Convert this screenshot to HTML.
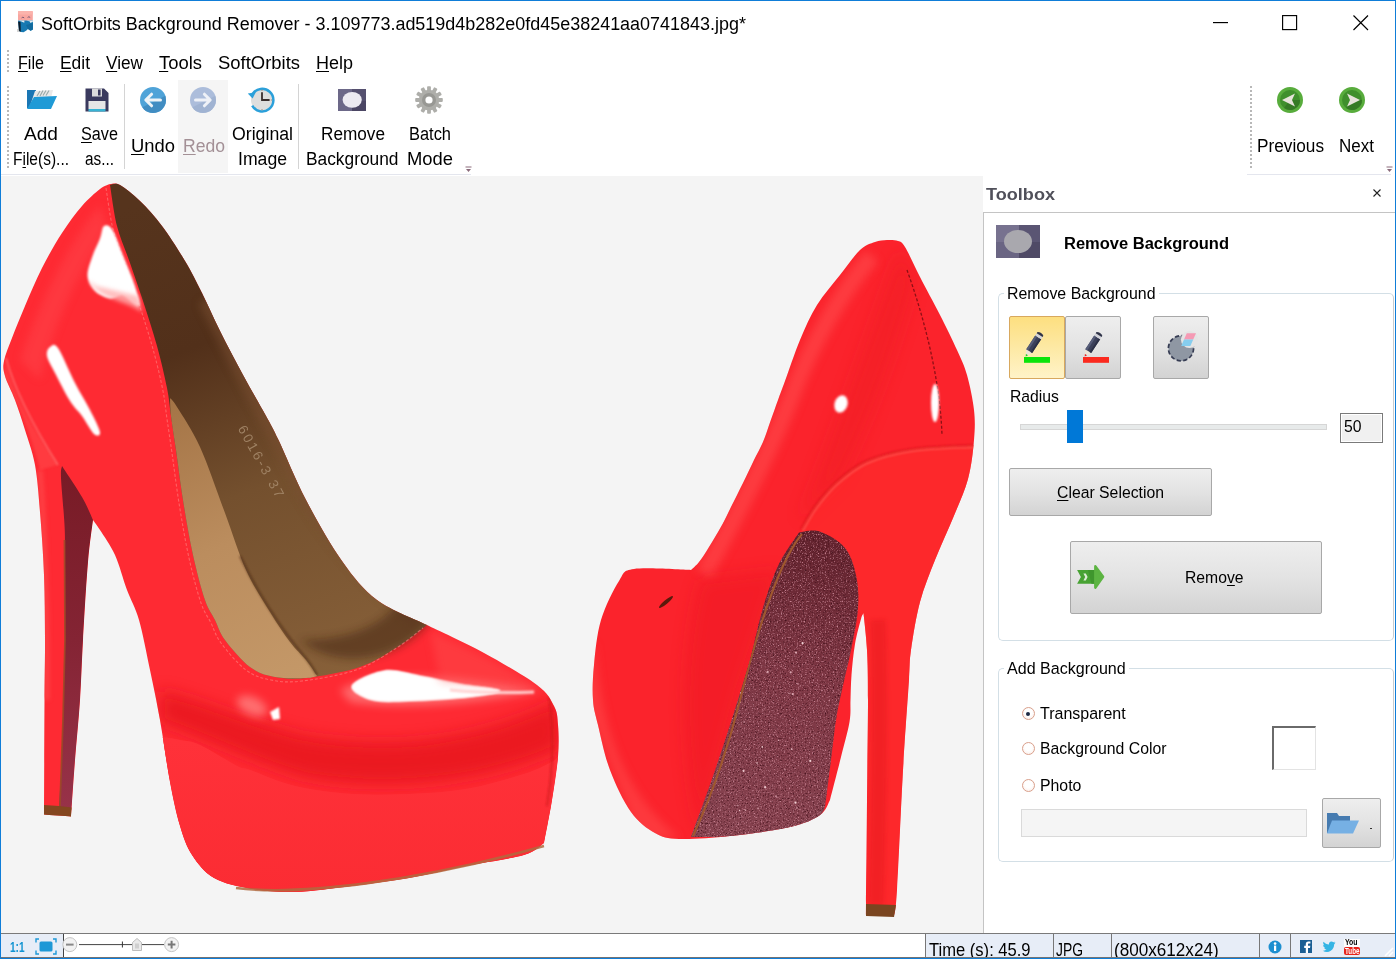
<!DOCTYPE html>
<html lang="en">
<head>
<meta charset="utf-8">
<title>SoftOrbits Background Remover</title>
<style>
*{box-sizing:border-box;margin:0;padding:0}
html,body{width:1396px;height:959px;overflow:hidden;background:#fff}
body{position:relative;font-family:"Liberation Sans",sans-serif;color:#000}
.abs{position:absolute}
.t{position:absolute;white-space:nowrap;line-height:1;transform-origin:0 0;font-family:"Liberation Sans",sans-serif}
.u{text-decoration:underline;text-underline-offset:2px;text-decoration-thickness:1px}
#win{position:absolute;left:0;top:0;width:1396px;height:959px;border:1px solid #0f7dd8;pointer-events:none;z-index:50}
#canvas{position:absolute;left:1px;top:176px;width:982px;height:757px;background:#f4f4f4;overflow:hidden}
#panel{position:absolute;left:983px;top:176px;width:412px;height:757px;background:#fff}
.grip{position:absolute;width:2px;background-image:linear-gradient(#b8b8b8 50%,transparent 50%);background-size:2px 4px}
.vsep{position:absolute;width:1px;background:#d4d4d4}
.gbtn{position:absolute;border:1px solid #a8a8a8;background:linear-gradient(#eee,#e3e3e3 50%,#d3d3d3);border-radius:2px;}
.grp{position:absolute;border:1px solid #d3dfe6;border-right-color:#c9cdd0;border-radius:5px}
.radio{position:absolute;width:13px;height:13px;border-radius:50%;border:1px solid #d9a08c;background:radial-gradient(circle at 50% 40%,#fff 40%,#fbe9e2)}
</style>
</head>
<body>
<!-- ===== title bar ===== -->
<svg class="abs" style="left:17px;top:10px" width="18" height="24" viewBox="0 0 18 24">
  <rect x="1" y="1" width="14.8" height="9.8" rx="1" fill="#f8a6a0"/><rect x="1" y="1" width="14.8" height="3.4" rx="1" fill="#fbb3ac"/>
  <path d="M1.1 10.4 H15.9 V19.6 L13.6 20.8 L11 19 L9.4 20.6 L6.6 22.3 L4 22 L2 21 Z" fill="#1679b2"/>
  <path d="M9 15 L15.9 13 V19.6 L13.6 20.8 L11 19 Z" fill="#126a9e"/>
  <path d="M1.1 11.6 L3.5 12 L3.8 21.8 L2 21 Z" fill="#0a1b2a"/>
  <path d="M1.4 10.4 L7.4 10.4 L7.3 12.8 L4.4 11.6 Z M9.6 10.4 H15.9 V11.8 L13.4 13 L12.8 11.4 Z" fill="#e4edf2"/>
  <path d="M4.6 7.9 Q5.9 6.4 7.2 7.9 M10.6 7.5 Q11.9 6 13.2 7.5" stroke="#6b5570" stroke-width=".9" fill="none"/>
  <ellipse cx="1.2" cy="20.5" rx="2.2" ry="1.6" fill="#555" opacity=".25"/>
</svg>
<span class="t" style="left:41px;top:15.7px;font-size:17.6px;transform:scaleX(1.0208)">SoftOrbits Background Remover - 3.109773.ad519d4b282e0fd45e38241aa0741843.jpg*</span>
<svg class="abs" style="left:1200px;top:8px" width="180" height="30" viewBox="0 0 180 30" fill="none" stroke="#000" stroke-width="1.15">
  <path d="M13 14.6 H28"/>
  <rect x="82.6" y="7.6" width="14" height="14"/>
  <path d="M153.5 7.5 L168 22 M168 7.5 L153.5 22"/>
</svg>
<!-- ===== menu bar ===== -->
<div class="grip" style="left:7px;top:50px;height:22px"></div>
<span class="t" style="left:18px;top:54.9px;font-size:17.6px;transform:scaleX(0.9168)"><span class="u">F</span>ile</span>
<span class="t" style="left:60px;top:54.9px;font-size:17.6px;transform:scaleX(0.9887)"><span class="u">E</span>dit</span>
<span class="t" style="left:106px;top:54.9px;font-size:17.6px;transform:scaleX(0.9781)"><span class="u">V</span>iew</span>
<span class="t" style="left:159px;top:54.9px;font-size:17.6px;transform:scaleX(1.0468)"><span class="u">T</span>ools</span>
<span class="t" style="left:218px;top:54.9px;font-size:17.6px;transform:scaleX(1.0483)">SoftOrbits</span>
<span class="t" style="left:316px;top:54.9px;font-size:17.6px;transform:scaleX(1.0220)"><span class="u">H</span>elp</span>
<!-- ===== toolbar ===== -->
<div class="grip" style="left:7px;top:86px;height:82px"></div>
<div class="abs" style="left:178px;top:80px;width:50px;height:93px;background:#f5f5f5"></div>
<div class="vsep" style="left:124px;top:84px;height:85px"></div>
<div class="vsep" style="left:298px;top:84px;height:85px"></div>
<div class="abs" style="left:1px;top:174px;width:470px;height:1px;background:#e4e6ee"></div>
<span class="t" style="left:24px;top:125.6px;font-size:17.6px;transform:scaleX(1.0858)">Add</span>
<span class="t" style="left:13px;top:150.6px;font-size:17.6px;transform:scaleX(0.8812)">F<span class="u">i</span>le(s)...</span>
<span class="t" style="left:81px;top:125.6px;font-size:17.6px;transform:scaleX(0.9221)"><span class="u">S</span>ave</span>
<span class="t" style="left:85px;top:150.6px;font-size:17.6px;transform:scaleX(0.8722)">as...</span>
<span class="t" style="left:131px;top:137.6px;font-size:17.6px;transform:scaleX(1.0457)"><span class="u">U</span>ndo</span>
<span class="t" style="left:183px;top:137.6px;font-size:17.6px;color:#a39096;transform:scaleX(0.9981)"><span class="u">R</span>edo</span>
<span class="t" style="left:231.5px;top:125.6px;font-size:17.6px;transform:scaleX(1.0062)">Original</span>
<span class="t" style="left:238px;top:150.6px;font-size:17.6px;transform:scaleX(1.0019)">Image</span>
<span class="t" style="left:321px;top:125.6px;font-size:17.6px;transform:scaleX(0.9769)">Remove</span>
<span class="t" style="left:306px;top:150.6px;font-size:17.6px;transform:scaleX(0.9850)">Background</span>
<span class="t" style="left:409px;top:125.6px;font-size:17.6px;transform:scaleX(0.9333)">Batch</span>
<span class="t" style="left:407px;top:150.6px;font-size:17.6px;transform:scaleX(1.0451)">Mode</span>
<!-- add files icon -->
<svg class="abs" style="left:24px;top:88px" width="36" height="24" viewBox="0 0 36 24">
  <path d="M3 2 H12 L9 20 H3 Z" fill="#1a76b4"/>
  <path d="M11 3 L29 2 L27 10 L6 18 Z" fill="#e9e9e9"/>
  <path d="M13 8 l3-5 M16 8 l3-5.5 M19 7.5 l3-5 M22 7.5 l3-5" stroke="#9aa" stroke-width="1.2"/>
  <path d="M10 9 L33 8 L27 21 H3 Z" fill="#1f9ad6"/>
</svg>
<!-- save icon -->
<svg class="abs" style="left:84px;top:87px" width="26" height="26" viewBox="0 0 26 26">
  <path d="M1.5 1.5 H20 L24.5 6 V24.5 H1.5 Z" fill="#3a3a5e"/>
  <rect x="8" y="1.5" width="10" height="8" fill="#dcdcdc"/><rect x="14" y="2.5" width="2.6" height="6" fill="#3a3a5e"/>
  <rect x="4.5" y="14" width="17" height="8" fill="#e6e6e6"/><rect x="4.5" y="22" width="17" height="2.5" fill="#38b3d4"/>
</svg>
<!-- undo -->
<svg class="abs" style="left:139px;top:86px" width="28" height="28" viewBox="0 0 28 28">
  <defs><clipPath id="cu"><circle cx="14" cy="14" r="13"/></clipPath></defs>
  <circle cx="14" cy="14" r="13" fill="#4fa3d8"/><path d="M-2 24 L30 8 V30 H-2 Z" fill="#3d87bd" opacity=".8" clip-path="url(#cu)"/>
  <path d="M7.2 14 H21.5 M12.6 8.2 L6.8 14 L12.6 19.8" fill="none" stroke="#eef3f7" stroke-width="3" stroke-linecap="round" stroke-linejoin="round"/>
</svg>
<!-- redo -->
<svg class="abs" style="left:189px;top:86px" width="28" height="28" viewBox="0 0 28 28">
  <circle cx="14" cy="14" r="13" fill="#acbddb"/><path d="M-2 24 L30 8 V30 H-2 Z" fill="#9db0d0" opacity=".8" clip-path="url(#cu)"/>
  <path d="M20.8 14 H6.5 M15.4 8.2 L21.2 14 L15.4 19.8" fill="none" stroke="#eef1f7" stroke-width="3" stroke-linecap="round" stroke-linejoin="round"/>
</svg>
<!-- original image clock -->
<svg class="abs" style="left:247px;top:86px" width="29" height="28" viewBox="0 0 29 28">
  <circle cx="15" cy="14" r="11" fill="#dedede"/>
  <path d="M5.6 8 A11.3 11.3 0 1 1 5.2 19.6" fill="none" stroke="#2ba0da" stroke-width="2.5"/>
  <path d="M0.8 7.6 L8.8 6.2 L5.6 12.6 Z" fill="#2ba0da"/>
  <path d="M15 6.3 V14 H22.6" stroke="#3a2e2e" stroke-width="1.8" fill="none"/>
  <path d="M15 3.6 V5 M15 23 V24.4 M25 14 H23.8" stroke="#a08a80" stroke-width="1"/>
</svg>
<!-- remove background icon -->
<svg class="abs" style="left:338px;top:89px" width="28" height="22" viewBox="0 0 28 22">
  <rect width="28" height="22" fill="#6c6888"/><rect x="14" width="14" height="22" fill="#55506f"/><rect x="14" y="12" width="14" height="10" fill="#4b4664"/>
  <ellipse cx="14.2" cy="10.8" rx="9.6" ry="7.9" fill="#eceaf1"/>
</svg>
<!-- gear -->
<svg class="abs" style="left:414px;top:85px" width="30" height="30" viewBox="-15 -15 30 30">
  <g fill="#aeaeaa"><circle r="10.3"/><rect x="-1.9" y="-13.8" width="3.8" height="5" rx=".8" transform="rotate(0)"/><rect x="-1.9" y="-13.8" width="3.8" height="5" rx=".8" transform="rotate(30)"/><rect x="-1.9" y="-13.8" width="3.8" height="5" rx=".8" transform="rotate(60)"/><rect x="-1.9" y="-13.8" width="3.8" height="5" rx=".8" transform="rotate(90)"/><rect x="-1.9" y="-13.8" width="3.8" height="5" rx=".8" transform="rotate(120)"/><rect x="-1.9" y="-13.8" width="3.8" height="5" rx=".8" transform="rotate(150)"/><rect x="-1.9" y="-13.8" width="3.8" height="5" rx=".8" transform="rotate(180)"/><rect x="-1.9" y="-13.8" width="3.8" height="5" rx=".8" transform="rotate(210)"/><rect x="-1.9" y="-13.8" width="3.8" height="5" rx=".8" transform="rotate(240)"/><rect x="-1.9" y="-13.8" width="3.8" height="5" rx=".8" transform="rotate(270)"/><rect x="-1.9" y="-13.8" width="3.8" height="5" rx=".8" transform="rotate(300)"/><rect x="-1.9" y="-13.8" width="3.8" height="5" rx=".8" transform="rotate(330)"/></g>
  <circle r="7" fill="#989894"/><circle r="3.6" fill="#fff"/>
</svg>
<!-- overflow chevrons -->
<svg class="abs" style="left:465px;top:166px" width="7" height="7" viewBox="0 0 7 7"><path d="M0.5 1 H6.5" stroke="#8a6a7a"/><path d="M1 3 H6 L3.5 6 Z" fill="#8a6a7a"/></svg>
<svg class="abs" style="left:1386px;top:166px" width="7" height="7" viewBox="0 0 7 7"><path d="M0.5 1 H6.5" stroke="#8a6a7a"/><path d="M1 3 H6 L3.5 6 Z" fill="#8a6a7a"/></svg>
<!-- right toolbar -->
<div class="grip" style="left:1250px;top:86px;height:82px"></div>
<div class="abs" style="left:1247px;top:174px;width:144px;height:1px;background:#e4e6ee"></div>
<span class="t" style="left:1257px;top:137.6px;font-size:17.6px;transform:scaleX(0.9788)">Previous</span>
<span class="t" style="left:1339px;top:137.6px;font-size:17.6px;transform:scaleX(0.9672)">Next</span>
<svg class="abs" style="left:1277px;top:87px" width="26" height="26" viewBox="0 0 26 26">
  <circle cx="13" cy="13" r="13" fill="#58ac3c"/><circle cx="13" cy="13" r="10" fill="#3f8f2c"/>
  <path d="M13 13 L23 13 A10 10 0 0 1 7 21 Z" fill="#357a25"/>
  <path d="M5 13 L18 6.5 L15 13 L18 19.5 Z" fill="#e6e2da"/>
</svg>
<svg class="abs" style="left:1339px;top:87px" width="26" height="26" viewBox="0 0 26 26">
  <circle cx="13" cy="13" r="13" fill="#58ac3c"/><circle cx="13" cy="13" r="10" fill="#3f8f2c"/>
  <path d="M13 13 L23 13 A10 10 0 0 1 7 21 Z" fill="#357a25"/>
  <path d="M21 13 L8 6.5 L11 13 L8 19.5 Z" fill="#e6e2da"/>
</svg>
<div id="canvas"><svg width="982" height="757" viewBox="1 176 982 757" style="position:absolute;left:0;top:0">
<defs>
<linearGradient id="lin" gradientUnits="userSpaceOnUse" x1="150" y1="200" x2="330" y2="680"><stop offset="0" stop-color="#56341d"/><stop offset=".3" stop-color="#52301a"/><stop offset=".6" stop-color="#74502e"/><stop offset="1" stop-color="#876039"/></linearGradient>
<linearGradient id="tan" gradientUnits="userSpaceOnUse" x1="170" y1="400" x2="300" y2="680"><stop offset="0" stop-color="#a47446"/><stop offset=".5" stop-color="#bb8d5e"/><stop offset="1" stop-color="#c49868"/></linearGradient>
<linearGradient id="plat" gradientUnits="userSpaceOnUse" x1="0" y1="740" x2="0" y2="895"><stop offset="0" stop-color="#ff3139"/><stop offset="1" stop-color="#fb2c33"/></linearGradient>
<linearGradient id="mar" gradientUnits="userSpaceOnUse" x1="0" y1="470" x2="0" y2="810"><stop offset="0" stop-color="#781b26"/><stop offset=".5" stop-color="#842434"/><stop offset="1" stop-color="#983249"/></linearGradient>
<linearGradient id="glit" gradientUnits="userSpaceOnUse" x1="810" y1="530" x2="740" y2="840"><stop offset="0" stop-color="#62222d"/><stop offset=".45" stop-color="#7e3744"/><stop offset="1" stop-color="#874350"/></linearGradient>
<filter id="b2" filterUnits="userSpaceOnUse" x="-20" y="150" width="1030" height="800"><feGaussianBlur stdDeviation="2"/></filter><filter id="b4" filterUnits="userSpaceOnUse" x="-20" y="150" width="1030" height="800"><feGaussianBlur stdDeviation="4"/></filter><filter id="b8" filterUnits="userSpaceOnUse" x="-20" y="150" width="1030" height="800"><feGaussianBlur stdDeviation="8"/></filter><filter id="b1" filterUnits="userSpaceOnUse" x="-20" y="150" width="1030" height="800"><feGaussianBlur stdDeviation="0.8"/></filter>
<filter id="nz1" x="0" y="0" width="100%" height="100%" color-interpolation-filters="sRGB"><feTurbulence type="fractalNoise" baseFrequency="0.75" numOctaves="2" seed="4"/><feColorMatrix type="matrix" values="0 0 0 0 0.78  0 0 0 0 0.52  0 0 0 0 0.58  3.2 0 0 0 -1.75"/></filter>
<filter id="nz2" x="0" y="0" width="100%" height="100%" color-interpolation-filters="sRGB"><feTurbulence type="fractalNoise" baseFrequency="0.6" numOctaves="2" seed="11"/><feColorMatrix type="matrix" values="0 0 0 0 0.27  0 0 0 0 0.07  0 0 0 0 0.11  0 3 0 0 -1.6"/></filter>
<clipPath id="cl"><path d="M120.0 185.0 C125.0 187.8 133.0 194.2 140.0 201.0 C147.0 207.8 154.5 216.0 162.0 226.0 C169.5 236.0 178.3 249.8 185.0 261.0 C191.7 272.2 196.2 281.3 202.0 293.0 C207.8 304.7 213.2 317.3 220.0 331.0 C226.8 344.7 235.3 360.8 243.0 375.0 C250.7 389.2 260.1 405.2 266.0 416.0 C271.9 426.8 271.8 426.0 278.5 440.0 C285.2 454.0 295.4 479.8 306.0 500.0 C316.6 520.2 330.2 544.3 342.0 561.0 C353.8 577.7 362.8 589.3 377.0 600.0 C391.2 610.7 418.7 620.8 427.0 625.0 C436.5 629.7 465.7 643.0 484.0 653.0 C502.3 663.0 525.3 676.2 537.0 685.0 C548.7 693.8 550.5 699.3 554.0 706.0 C557.5 712.7 557.3 716.5 558.0 725.0 C558.7 733.5 559.0 744.5 558.0 757.0 C557.0 769.5 554.3 785.7 552.0 800.0 C549.7 814.3 545.3 835.8 544.0 843.0 C540.7 845.0 537.0 851.2 524.0 855.0 C511.0 858.8 485.2 862.2 466.0 866.0 C446.8 869.8 428.0 874.7 409.0 878.0 C390.0 881.3 371.0 883.7 352.0 886.0 C333.0 888.3 311.7 891.5 295.0 892.0 C278.3 892.5 265.5 891.3 252.0 889.0 C238.5 886.7 224.0 883.7 214.0 878.0 C204.0 872.3 197.7 863.7 192.0 855.0 C186.3 846.3 183.7 838.2 180.0 826.0 C176.3 813.8 173.3 799.7 170.0 782.0 C166.7 764.3 163.3 738.7 160.0 720.0 C156.7 701.3 153.5 686.7 150.0 670.0 C146.5 653.3 142.8 633.3 139.0 620.0 C135.2 606.7 131.0 600.8 127.0 590.0 C123.0 579.2 119.5 565.0 115.0 555.0 C110.5 545.0 103.7 535.8 100.0 530.0 C96.3 524.2 94.2 521.7 93.0 520.0 C92.2 527.0 89.7 542.0 88.0 562.0 C86.3 582.0 84.3 617.0 83.0 640.0 C81.7 663.0 81.3 680.0 80.0 700.0 C78.7 720.0 76.5 740.6 75.0 760.0 C73.5 779.4 71.7 807.1 71.0 816.5 C66.5 816.2 48.5 814.8 44.0 814.5 C44.1 795.4 44.3 729.1 44.5 700.0 C44.7 670.9 45.1 660.8 45.0 640.0 C44.9 619.2 44.8 596.3 44.0 575.0 C43.2 553.7 41.5 530.3 40.0 512.0 C38.5 493.7 37.5 478.7 35.0 465.0 C32.5 451.3 28.3 440.8 25.0 430.0 C21.7 419.2 18.3 409.0 15.0 400.0 C11.7 391.0 6.8 382.5 5.0 376.0 C3.2 369.5 2.8 367.3 4.0 361.0 C5.2 354.7 8.5 347.2 12.0 338.0 C15.5 328.8 20.0 317.7 25.0 306.0 C30.0 294.3 35.8 280.2 42.0 268.0 C48.2 255.8 55.3 243.3 62.0 233.0 C68.7 222.7 75.7 213.3 82.0 206.0 C88.3 198.7 95.3 192.7 100.0 189.0 C104.7 185.3 108.3 184.8 110.0 184.0 C111.7 184.2 115.0 182.2 120.0 185.0 Z"/></clipPath><clipPath id="cr"><path d="M887.0 240.0 C883.2 240.2 879.5 240.3 875.0 242.0 C870.5 243.7 865.8 244.5 860.0 250.0 C854.2 255.5 847.2 265.8 840.0 275.0 C832.8 284.2 823.7 294.2 817.0 305.0 C810.3 315.8 805.3 327.3 800.0 340.0 C794.7 352.7 788.7 371.0 785.0 381.0 C781.3 391.0 780.4 393.3 778.0 400.0 C775.6 406.7 773.0 414.0 770.5 421.0 C768.0 428.0 765.8 435.5 763.0 442.0 C760.2 448.5 757.3 453.2 754.0 460.0 C750.7 466.8 746.7 475.5 743.0 483.0 C739.3 490.5 735.5 498.0 732.0 505.0 C728.5 512.0 725.8 518.0 722.0 525.0 C718.2 532.0 712.8 540.8 709.0 547.0 C705.2 553.2 702.0 558.2 699.0 562.0 C696.0 565.8 692.3 568.7 691.0 570.0 C681.5 569.8 646.0 567.2 634.0 569.0 C622.0 570.8 624.5 572.5 619.0 581.0 C613.5 589.5 605.2 606.0 601.0 620.0 C596.8 634.0 595.3 651.7 594.0 665.0 C592.7 678.3 592.3 690.0 593.0 700.0 C593.7 710.0 595.2 713.3 598.0 725.0 C600.8 736.7 604.5 755.5 610.0 770.0 C615.5 784.5 623.5 801.5 631.0 812.0 C638.5 822.5 647.0 828.5 655.0 833.0 C663.0 837.5 666.5 838.5 679.0 839.0 C691.5 839.5 711.5 838.0 730.0 836.0 C748.5 834.0 775.0 830.5 790.0 827.0 C805.0 823.5 813.3 819.5 820.0 815.0 C826.7 810.5 828.3 802.5 830.0 800.0 C831.8 792.8 837.8 770.0 841.0 757.0 C844.2 744.0 847.9 731.5 849.5 722.0 C851.1 712.5 850.2 707.8 850.5 700.0 C850.8 692.2 850.8 684.3 851.5 675.0 C852.2 665.7 853.4 653.3 855.0 644.0 C856.6 634.7 859.6 624.2 861.0 619.0 C862.4 613.8 863.1 614.0 863.5 613.0 C864.1 619.2 866.2 635.5 867.0 650.0 C867.8 664.5 868.0 675.0 868.0 700.0 C868.0 725.0 867.3 766.2 867.0 800.0 C866.7 833.8 866.2 883.8 866.0 903.0 C865.8 922.2 866.0 913.0 866.0 915.0 C870.7 915.2 889.3 915.8 894.0 916.0 C894.5 911.7 895.5 914.3 897.0 890.0 C898.5 865.7 901.0 805.0 903.0 770.0 C905.0 735.0 907.7 700.0 909.0 680.0 C910.3 660.0 909.2 663.0 911.0 650.0 C912.8 637.0 916.0 617.0 920.0 602.0 C924.0 587.0 929.5 574.0 935.0 560.0 C940.5 546.0 947.5 531.5 953.0 518.0 C958.5 504.5 964.5 492.0 968.0 479.0 C971.5 466.0 973.0 451.5 974.0 440.0 C975.0 428.5 975.2 420.8 974.0 410.0 C972.8 399.2 969.8 385.0 967.0 375.0 C964.2 365.0 961.5 360.0 957.0 350.0 C952.5 340.0 946.2 327.2 940.0 315.0 C933.8 302.8 925.8 288.3 920.0 277.0 C914.2 265.7 908.7 253.0 905.0 247.0 C901.3 241.0 901.0 242.2 898.0 241.0 C895.0 239.8 890.8 239.8 887.0 240.0 Z"/></clipPath><clipPath id="cg"><path d="M802.0 532.0 C806.2 531.2 813.8 529.3 821.0 532.0 C828.2 534.7 839.2 540.8 845.0 548.0 C850.8 555.2 853.8 565.0 856.0 575.0 C858.2 585.0 858.8 595.5 858.0 608.0 C857.2 620.5 853.7 636.3 851.0 650.0 C848.3 663.7 844.5 678.3 842.0 690.0 C839.5 701.7 837.8 708.3 836.0 720.0 C834.2 731.7 832.7 746.7 831.0 760.0 C829.3 773.3 826.8 793.3 826.0 800.0 C825.0 802.5 826.0 810.5 820.0 815.0 C814.0 819.5 805.0 823.5 790.0 827.0 C775.0 830.5 746.5 834.3 730.0 836.0 C713.5 837.7 697.5 836.8 691.0 837.0 C694.5 827.3 705.5 797.7 712.0 779.0 C718.5 760.3 724.7 741.5 730.0 725.0 C735.3 708.5 740.5 691.5 744.0 680.0 C747.5 668.5 747.8 668.0 751.0 656.0 C754.2 644.0 758.5 623.0 763.0 608.0 C767.5 593.0 772.5 577.8 778.0 566.0 C783.5 554.2 792.0 542.7 796.0 537.0 C800.0 531.3 797.8 532.8 802.0 532.0 Z"/></clipPath>
<pattern id="spk" width="23" height="19" patternUnits="userSpaceOnUse"><rect width="23" height="19" fill="none"/><circle cx="3" cy="4" r=".9" fill="#a86a78"/><circle cx="12" cy="2" r=".7" fill="#8d4a5a"/><circle cx="18" cy="9" r=".9" fill="#9a5868"/><circle cx="7" cy="13" r=".8" fill="#4e1822"/><circle cx="15" cy="16" r=".8" fill="#b07a86"/><circle cx="21" cy="3" r=".7" fill="#4e1822"/><circle cx="10" cy="8" r=".7" fill="#521a26"/></pattern>
</defs>
<g>
<path d="M120.0 185.0 C125.0 187.8 133.0 194.2 140.0 201.0 C147.0 207.8 154.5 216.0 162.0 226.0 C169.5 236.0 178.3 249.8 185.0 261.0 C191.7 272.2 196.2 281.3 202.0 293.0 C207.8 304.7 213.2 317.3 220.0 331.0 C226.8 344.7 235.3 360.8 243.0 375.0 C250.7 389.2 260.1 405.2 266.0 416.0 C271.9 426.8 271.8 426.0 278.5 440.0 C285.2 454.0 295.4 479.8 306.0 500.0 C316.6 520.2 330.2 544.3 342.0 561.0 C353.8 577.7 362.8 589.3 377.0 600.0 C391.2 610.7 418.7 620.8 427.0 625.0 C436.5 629.7 465.7 643.0 484.0 653.0 C502.3 663.0 525.3 676.2 537.0 685.0 C548.7 693.8 550.5 699.3 554.0 706.0 C557.5 712.7 557.3 716.5 558.0 725.0 C558.7 733.5 559.0 744.5 558.0 757.0 C557.0 769.5 554.3 785.7 552.0 800.0 C549.7 814.3 545.3 835.8 544.0 843.0 C540.7 845.0 537.0 851.2 524.0 855.0 C511.0 858.8 485.2 862.2 466.0 866.0 C446.8 869.8 428.0 874.7 409.0 878.0 C390.0 881.3 371.0 883.7 352.0 886.0 C333.0 888.3 311.7 891.5 295.0 892.0 C278.3 892.5 265.5 891.3 252.0 889.0 C238.5 886.7 224.0 883.7 214.0 878.0 C204.0 872.3 197.7 863.7 192.0 855.0 C186.3 846.3 183.7 838.2 180.0 826.0 C176.3 813.8 173.3 799.7 170.0 782.0 C166.7 764.3 163.3 738.7 160.0 720.0 C156.7 701.3 153.5 686.7 150.0 670.0 C146.5 653.3 142.8 633.3 139.0 620.0 C135.2 606.7 131.0 600.8 127.0 590.0 C123.0 579.2 119.5 565.0 115.0 555.0 C110.5 545.0 103.7 535.8 100.0 530.0 C96.3 524.2 94.2 521.7 93.0 520.0 C92.2 527.0 89.7 542.0 88.0 562.0 C86.3 582.0 84.3 617.0 83.0 640.0 C81.7 663.0 81.3 680.0 80.0 700.0 C78.7 720.0 76.5 740.6 75.0 760.0 C73.5 779.4 71.7 807.1 71.0 816.5 C66.5 816.2 48.5 814.8 44.0 814.5 C44.1 795.4 44.3 729.1 44.5 700.0 C44.7 670.9 45.1 660.8 45.0 640.0 C44.9 619.2 44.8 596.3 44.0 575.0 C43.2 553.7 41.5 530.3 40.0 512.0 C38.5 493.7 37.5 478.7 35.0 465.0 C32.5 451.3 28.3 440.8 25.0 430.0 C21.7 419.2 18.3 409.0 15.0 400.0 C11.7 391.0 6.8 382.5 5.0 376.0 C3.2 369.5 2.8 367.3 4.0 361.0 C5.2 354.7 8.5 347.2 12.0 338.0 C15.5 328.8 20.0 317.7 25.0 306.0 C30.0 294.3 35.8 280.2 42.0 268.0 C48.2 255.8 55.3 243.3 62.0 233.0 C68.7 222.7 75.7 213.3 82.0 206.0 C88.3 198.7 95.3 192.7 100.0 189.0 C104.7 185.3 108.3 184.8 110.0 184.0 C111.7 184.2 115.0 182.2 120.0 185.0 Z" fill="#fe2a33"/>
<g clip-path="url(#cl)">
<path d="M162.0 737.0 C165.0 737.5 173.7 738.7 180.0 740.0 C186.3 741.3 190.5 740.7 200.0 745.0 C209.5 749.3 228.7 761.8 237.0 766.0 C245.3 770.2 240.3 766.7 250.0 770.0 C259.7 773.3 278.0 782.0 295.0 786.0 C312.0 790.0 333.0 792.7 352.0 794.0 C371.0 795.3 390.0 794.8 409.0 794.0 C428.0 793.2 446.8 792.3 466.0 789.0 C485.2 785.7 510.0 778.3 524.0 774.0 C538.0 769.7 544.3 765.8 550.0 763.0 C555.7 760.2 556.7 758.0 558.0 757.0 C557.0 764.2 554.3 785.7 552.0 800.0 C549.7 814.3 545.3 835.8 544.0 843.0 C540.7 845.0 537.0 851.2 524.0 855.0 C511.0 858.8 485.2 862.2 466.0 866.0 C446.8 869.8 428.0 874.7 409.0 878.0 C390.0 881.3 371.0 883.7 352.0 886.0 C333.0 888.3 311.7 891.5 295.0 892.0 C278.3 892.5 265.5 891.3 252.0 889.0 C238.5 886.7 224.0 883.7 214.0 878.0 C204.0 872.3 197.7 863.7 192.0 855.0 C186.3 846.3 183.7 838.2 180.0 826.0 C176.3 813.8 173.0 796.8 170.0 782.0 C167.0 767.2 163.3 744.5 162.0 737.0 Z" fill="url(#plat)"/>
<path d="M160 722 C200 735 250 760 300 776 C360 790 470 790 560 748 L560 700 C470 745 380 750 300 735 C250 722 200 700 160 690 Z" fill="#e6141d" opacity=".8" filter="url(#b8)"/>
<path d="M162.0 737.0 C165.0 737.5 173.7 738.7 180.0 740.0 C186.3 741.3 190.5 740.7 200.0 745.0 C209.5 749.3 228.7 761.8 237.0 766.0 C245.3 770.2 240.3 766.7 250.0 770.0 C259.7 773.3 278.0 782.0 295.0 786.0 C312.0 790.0 333.0 792.7 352.0 794.0 C371.0 795.3 390.0 794.8 409.0 794.0 C428.0 793.2 446.8 792.3 466.0 789.0 C485.2 785.7 510.0 778.3 524.0 774.0 C538.0 769.7 544.3 765.8 550.0 763.0 C555.7 760.2 556.7 758.0 558.0 757.0 C557.0 764.2 554.3 785.7 552.0 800.0 C549.7 814.3 545.3 835.8 544.0 843.0 C540.7 845.0 537.0 851.2 524.0 855.0 C511.0 858.8 485.2 862.2 466.0 866.0 C446.8 869.8 428.0 874.7 409.0 878.0 C390.0 881.3 371.0 883.7 352.0 886.0 C333.0 888.3 311.7 891.5 295.0 892.0 C278.3 892.5 265.5 891.3 252.0 889.0 C238.5 886.7 224.0 883.7 214.0 878.0 C204.0 872.3 197.7 863.7 192.0 855.0 C186.3 846.3 183.7 838.2 180.0 826.0 C176.3 813.8 173.0 796.8 170.0 782.0 C167.0 767.2 163.3 744.5 162.0 737.0 Z" fill="url(#plat)"/>
<path d="M40 470 C44 520 47 600 47 700" stroke="#ff5a58" stroke-width="5" fill="none" opacity=".5" filter="url(#b2)"/>
<path d="M62.0 466.0 C65.3 471.2 76.8 488.0 82.0 497.0 C87.2 506.0 91.2 516.2 93.0 520.0 C92.2 527.0 89.7 542.0 88.0 562.0 C86.3 582.0 84.3 617.0 83.0 640.0 C81.7 663.0 81.3 680.0 80.0 700.0 C78.7 720.0 76.4 741.7 75.0 760.0 C73.6 778.3 72.1 801.7 71.5 810.0 C69.4 809.8 61.1 809.2 59.0 809.0 C59.4 800.8 60.8 778.2 61.5 760.0 C62.2 741.8 62.9 720.0 63.5 700.0 C64.1 680.0 64.8 663.3 65.0 640.0 C65.2 616.7 65.1 579.2 65.0 560.0 C64.9 540.8 65.2 538.7 64.5 525.0 C63.8 511.3 61.4 487.8 61.0 478.0 C60.6 468.2 61.8 468.0 62.0 466.0 Z" fill="url(#mar)"/>
<path d="M43 805 L59 806 L72 807.5 L72 818 L43 816 Z" fill="#84461f"/>
<path d="M64.5 540 L65 640 L63 720 L60 806" stroke="#9a4a26" stroke-width="1.8" fill="none" opacity=".85"/>
<path d="M20 360 C40 300 70 240 100 205 L108 230 C80 270 55 320 40 380 Z" fill="#ff4a50" opacity=".45" filter="url(#b4)"/>
<path d="M5 360 C12 390 30 425 58 465 L40 470 C30 430 16 400 4 378 Z" fill="#ff4a4c" opacity=".55" filter="url(#b1)"/>
<path d="M6 358 C14 388 32 424 58 465" stroke="#ff7a78" stroke-width="1.6" fill="none" opacity=".75" filter="url(#b1)"/>
</g>
<path d="M110.0 185.0 C111.2 191.8 113.7 213.0 117.0 226.0 C120.3 239.0 125.7 250.5 130.0 263.0 C134.3 275.5 138.5 287.2 143.0 301.0 C147.5 314.8 153.0 331.5 157.0 346.0 C161.0 360.5 164.7 376.3 167.0 388.0 C169.3 399.7 169.5 405.7 171.0 416.0 C172.5 426.3 174.0 436.0 176.0 450.0 C178.0 464.0 180.2 482.5 183.0 500.0 C185.8 517.5 189.3 538.3 193.0 555.0 C196.7 571.7 201.3 589.2 205.0 600.0 C208.7 610.8 211.7 613.3 215.0 620.0 C218.3 626.7 219.2 632.2 225.0 640.0 C230.8 647.8 241.7 660.8 250.0 667.0 C258.3 673.2 265.7 675.2 275.0 677.0 C284.3 678.8 291.8 679.7 306.0 678.0 C320.2 676.3 344.5 672.3 360.0 667.0 C375.5 661.7 387.8 653.0 399.0 646.0 C410.2 639.0 422.3 628.5 427.0 625.0 C418.7 620.8 391.2 610.7 377.0 600.0 C362.8 589.3 353.8 577.7 342.0 561.0 C330.2 544.3 316.6 520.2 306.0 500.0 C295.4 479.8 285.2 454.0 278.5 440.0 C271.8 426.0 271.9 426.8 266.0 416.0 C260.1 405.2 250.7 389.2 243.0 375.0 C235.3 360.8 226.8 344.7 220.0 331.0 C213.2 317.3 207.8 304.7 202.0 293.0 C196.2 281.3 191.7 272.2 185.0 261.0 C178.3 249.8 169.5 236.0 162.0 226.0 C154.5 216.0 147.0 207.8 140.0 201.0 C133.0 194.2 125.0 187.7 120.0 185.0 C115.0 182.3 111.7 185.0 110.0 185.0 Z" fill="url(#lin)"/>
<clipPath id="cli"><path d="M110.0 185.0 C111.2 191.8 113.7 213.0 117.0 226.0 C120.3 239.0 125.7 250.5 130.0 263.0 C134.3 275.5 138.5 287.2 143.0 301.0 C147.5 314.8 153.0 331.5 157.0 346.0 C161.0 360.5 164.7 376.3 167.0 388.0 C169.3 399.7 169.5 405.7 171.0 416.0 C172.5 426.3 174.0 436.0 176.0 450.0 C178.0 464.0 180.2 482.5 183.0 500.0 C185.8 517.5 189.3 538.3 193.0 555.0 C196.7 571.7 201.3 589.2 205.0 600.0 C208.7 610.8 211.7 613.3 215.0 620.0 C218.3 626.7 219.2 632.2 225.0 640.0 C230.8 647.8 241.7 660.8 250.0 667.0 C258.3 673.2 265.7 675.2 275.0 677.0 C284.3 678.8 291.8 679.7 306.0 678.0 C320.2 676.3 344.5 672.3 360.0 667.0 C375.5 661.7 387.8 653.0 399.0 646.0 C410.2 639.0 422.3 628.5 427.0 625.0 C418.7 620.8 391.2 610.7 377.0 600.0 C362.8 589.3 353.8 577.7 342.0 561.0 C330.2 544.3 316.6 520.2 306.0 500.0 C295.4 479.8 285.2 454.0 278.5 440.0 C271.8 426.0 271.9 426.8 266.0 416.0 C260.1 405.2 250.7 389.2 243.0 375.0 C235.3 360.8 226.8 344.7 220.0 331.0 C213.2 317.3 207.8 304.7 202.0 293.0 C196.2 281.3 191.7 272.2 185.0 261.0 C178.3 249.8 169.5 236.0 162.0 226.0 C154.5 216.0 147.0 207.8 140.0 201.0 C133.0 194.2 125.0 187.7 120.0 185.0 C115.0 182.3 111.7 185.0 110.0 185.0 Z"/></clipPath>
<g clip-path="url(#cli)"><path d="M205 300 C235 360 260 410 280 445 C310 510 350 570 420 622" stroke="#7a5030" stroke-width="14" fill="none" opacity=".55" filter="url(#b4)"/></g>
<path d="M170.0 398.0 C171.2 399.5 172.0 398.8 177.0 407.0 C182.0 415.2 192.0 429.3 200.0 447.0 C208.0 464.7 217.3 492.5 225.0 513.0 C232.7 533.5 238.5 553.5 246.0 570.0 C253.5 586.5 262.7 600.0 270.0 612.0 C277.3 624.0 284.0 634.0 290.0 642.0 C296.0 650.0 301.5 654.3 306.0 660.0 C310.5 665.7 315.2 673.3 317.0 676.0 C315.2 676.3 313.0 677.8 306.0 678.0 C299.0 678.2 284.3 678.8 275.0 677.0 C265.7 675.2 258.3 673.2 250.0 667.0 C241.7 660.8 230.8 647.8 225.0 640.0 C219.2 632.2 218.3 626.7 215.0 620.0 C211.7 613.3 208.7 610.8 205.0 600.0 C201.3 589.2 196.7 571.7 193.0 555.0 C189.3 538.3 185.8 517.5 183.0 500.0 C180.2 482.5 178.0 464.0 176.0 450.0 C174.0 436.0 172.0 424.7 171.0 416.0 C170.0 407.3 170.2 401.0 170.0 398.0 Z" fill="url(#tan)"/>
<path d="M240 556 C256 590 280 628 304 656 C310 663 314 670 317 675" stroke="#42220f" stroke-width="2.2" fill="none" opacity=".55" filter="url(#b1)"/>
<g clip-path="url(#cl)"><path d="M300 640 C340 672 400 660 430 622 L400 600 C380 630 340 640 300 640 Z" fill="#3a1a0a" opacity=".45" filter="url(#b4)"/></g>
<text transform="translate(237.5 428.5) rotate(61)" font-family="Liberation Sans, sans-serif" font-size="13.5" textLength="80" fill="#a88c6e" opacity=".85">6016-3 37</text>
<path d="M110.0 185.0 C111.2 191.8 113.7 213.0 117.0 226.0 C120.3 239.0 125.7 250.5 130.0 263.0 C134.3 275.5 138.5 287.2 143.0 301.0 C147.5 314.8 153.0 331.5 157.0 346.0 C161.0 360.5 164.7 376.3 167.0 388.0 C169.3 399.7 169.5 405.7 171.0 416.0 C172.5 426.3 174.0 436.0 176.0 450.0 C178.0 464.0 180.2 482.5 183.0 500.0 C185.8 517.5 189.3 538.3 193.0 555.0 C196.7 571.7 201.3 589.2 205.0 600.0 C208.7 610.8 211.7 613.3 215.0 620.0 C218.3 626.7 219.2 632.2 225.0 640.0 C230.8 647.8 241.7 660.8 250.0 667.0 C258.3 673.2 265.7 675.2 275.0 677.0 C284.3 678.8 291.8 679.7 306.0 678.0 C320.2 676.3 344.5 672.3 360.0 667.0 C375.5 661.7 387.8 653.0 399.0 646.0 C410.2 639.0 422.3 628.5 427.0 625.0" fill="none" stroke="#ff8d88" stroke-width="1.1" stroke-dasharray="3 2" transform="translate(-4 3)" opacity=".55"/>
<path d="M104.0 226.0 C106.1 224.6 109.2 224.7 112.5 230.0 C115.8 235.3 120.2 248.7 124.0 258.0 C127.8 267.3 132.5 278.0 135.0 286.0 C137.5 294.0 141.1 304.3 139.0 306.0 C136.9 307.7 127.3 297.2 122.5 296.0 C117.7 294.8 114.6 299.3 110.0 298.5 C105.4 297.7 98.8 294.8 95.0 291.0 C91.2 287.2 87.9 281.8 87.5 276.0 C87.1 270.2 90.4 262.2 92.5 256.0 C94.6 249.8 98.1 243.5 100.0 238.5 C101.9 233.5 101.9 227.4 104.0 226.0 Z" fill="#fff" filter="url(#b1)"/>
<path d="M88 280 C100 300 125 300 142 312 L138 296 L96 286 Z" fill="#ffb0b0" opacity=".8" filter="url(#b2)"/>
<path d="M50.0 347.0 C51.8 345.7 53.8 342.0 58.0 348.0 C62.2 354.0 69.7 372.7 75.0 383.0 C80.3 393.3 85.8 401.8 90.0 410.0 C94.2 418.2 99.3 428.0 100.0 432.0 C100.7 436.0 97.0 436.7 94.0 434.0 C91.0 431.3 86.0 421.5 82.0 416.0 C78.0 410.5 74.5 408.2 70.0 401.0 C65.5 393.8 58.8 380.5 55.0 373.0 C51.2 365.5 47.8 360.3 47.0 356.0 C46.2 351.7 48.2 348.3 50.0 347.0 Z" fill="#fff" filter="url(#b1)"/>
<path d="M352.0 686.0 C354.0 681.2 372.7 672.7 384.0 671.0 C395.3 669.3 407.3 673.8 420.0 676.0 C432.7 678.2 446.7 681.6 460.0 684.0 C473.3 686.4 498.3 688.3 500.0 690.5 C501.7 692.7 485.0 695.2 470.0 697.0 C455.0 698.8 426.3 700.5 410.0 701.0 C393.7 701.5 381.7 702.5 372.0 700.0 C362.3 697.5 350.0 690.8 352.0 686.0 Z" fill="#fff" filter="url(#b1)"/>
<path d="M340 690 C380 668 450 676 540 690 C480 705 400 710 350 702 Z" fill="#ff9a98" opacity=".55" filter="url(#b4)"/>
<path d="M352.0 686.0 C354.0 681.2 372.7 672.7 384.0 671.0 C395.3 669.3 407.3 673.8 420.0 676.0 C432.7 678.2 446.7 681.6 460.0 684.0 C473.3 686.4 498.3 688.3 500.0 690.5 C501.7 692.7 485.0 695.2 470.0 697.0 C455.0 698.8 426.3 700.5 410.0 701.0 C393.7 701.5 381.7 702.5 372.0 700.0 C362.3 697.5 350.0 690.8 352.0 686.0 Z" fill="#fff" filter="url(#b1)"/>
<path d="M450 690 C480 693 510 693 534 692" stroke="#ffd6d6" stroke-width="3" fill="none" filter="url(#b1)"/>
<g clip-path="url(#cl)"><path d="M430 630 C470 650 520 670 552 700 L545 690 L440 682 Z" fill="#ff5a58" opacity=".35" filter="url(#b4)"/><path d="M549 697 C554 730 553 770 547 806" stroke="#c8141c" stroke-width="1.6" fill="none" opacity=".7" filter="url(#b1)"/></g>
<ellipse cx="252" cy="706" rx="16" ry="9" fill="#ff8c8a" opacity=".7" filter="url(#b4)" transform="rotate(25 252 706)"/>
<path d="M270 712 L279 707 L280 719 L273 720 Z" fill="#fff" filter="url(#b1)"/>
<path d="M236 888 C300 896 420 881 544 846" stroke="#b06a40" stroke-width="2.6" fill="none" opacity=".85"/>
</g>
<g>
<path d="M887.0 240.0 C883.2 240.2 879.5 240.3 875.0 242.0 C870.5 243.7 865.8 244.5 860.0 250.0 C854.2 255.5 847.2 265.8 840.0 275.0 C832.8 284.2 823.7 294.2 817.0 305.0 C810.3 315.8 805.3 327.3 800.0 340.0 C794.7 352.7 788.7 371.0 785.0 381.0 C781.3 391.0 780.4 393.3 778.0 400.0 C775.6 406.7 773.0 414.0 770.5 421.0 C768.0 428.0 765.8 435.5 763.0 442.0 C760.2 448.5 757.3 453.2 754.0 460.0 C750.7 466.8 746.7 475.5 743.0 483.0 C739.3 490.5 735.5 498.0 732.0 505.0 C728.5 512.0 725.8 518.0 722.0 525.0 C718.2 532.0 712.8 540.8 709.0 547.0 C705.2 553.2 702.0 558.2 699.0 562.0 C696.0 565.8 692.3 568.7 691.0 570.0 C681.5 569.8 646.0 567.2 634.0 569.0 C622.0 570.8 624.5 572.5 619.0 581.0 C613.5 589.5 605.2 606.0 601.0 620.0 C596.8 634.0 595.3 651.7 594.0 665.0 C592.7 678.3 592.3 690.0 593.0 700.0 C593.7 710.0 595.2 713.3 598.0 725.0 C600.8 736.7 604.5 755.5 610.0 770.0 C615.5 784.5 623.5 801.5 631.0 812.0 C638.5 822.5 647.0 828.5 655.0 833.0 C663.0 837.5 666.5 838.5 679.0 839.0 C691.5 839.5 711.5 838.0 730.0 836.0 C748.5 834.0 775.0 830.5 790.0 827.0 C805.0 823.5 813.3 819.5 820.0 815.0 C826.7 810.5 828.3 802.5 830.0 800.0 C831.8 792.8 837.8 770.0 841.0 757.0 C844.2 744.0 847.9 731.5 849.5 722.0 C851.1 712.5 850.2 707.8 850.5 700.0 C850.8 692.2 850.8 684.3 851.5 675.0 C852.2 665.7 853.4 653.3 855.0 644.0 C856.6 634.7 859.6 624.2 861.0 619.0 C862.4 613.8 863.1 614.0 863.5 613.0 C864.1 619.2 866.2 635.5 867.0 650.0 C867.8 664.5 868.0 675.0 868.0 700.0 C868.0 725.0 867.3 766.2 867.0 800.0 C866.7 833.8 866.2 883.8 866.0 903.0 C865.8 922.2 866.0 913.0 866.0 915.0 C870.7 915.2 889.3 915.8 894.0 916.0 C894.5 911.7 895.5 914.3 897.0 890.0 C898.5 865.7 901.0 805.0 903.0 770.0 C905.0 735.0 907.7 700.0 909.0 680.0 C910.3 660.0 909.2 663.0 911.0 650.0 C912.8 637.0 916.0 617.0 920.0 602.0 C924.0 587.0 929.5 574.0 935.0 560.0 C940.5 546.0 947.5 531.5 953.0 518.0 C958.5 504.5 964.5 492.0 968.0 479.0 C971.5 466.0 973.0 451.5 974.0 440.0 C975.0 428.5 975.2 420.8 974.0 410.0 C972.8 399.2 969.8 385.0 967.0 375.0 C964.2 365.0 961.5 360.0 957.0 350.0 C952.5 340.0 946.2 327.2 940.0 315.0 C933.8 302.8 925.8 288.3 920.0 277.0 C914.2 265.7 908.7 253.0 905.0 247.0 C901.3 241.0 901.0 242.2 898.0 241.0 C895.0 239.8 890.8 239.8 887.0 240.0 Z" fill="#fb232c"/>
<g clip-path="url(#cr)">
<path d="M872 256 C846 286 812 340 790 400 C770 450 740 510 704 574" stroke="#ff5555" stroke-width="17" fill="none" opacity=".5" filter="url(#b4)"/>
<path d="M900 250 C870 330 840 420 800 520 L840 480 C880 400 900 330 915 280 Z" fill="#ee1a22" opacity=".5" filter="url(#b8)"/>
<path d="M974.0 445.0 C963.5 445.7 929.0 446.3 911.0 449.0 C893.0 451.7 878.5 455.5 866.0 461.0 C853.5 466.5 844.5 474.5 836.0 482.0 C827.5 489.5 820.8 498.2 815.0 506.0 C809.2 513.8 803.3 525.2 801.0 529.0 L863 617 L868 800 L866 916 L895 916 L910 660 L940 550 L975 470 Z" fill="#ff2c2c" opacity=".6"/>
<path d="M974.0 445.0 C963.5 445.7 929.0 446.3 911.0 449.0 C893.0 451.7 878.5 455.5 866.0 461.0 C853.5 466.5 844.5 474.5 836.0 482.0 C827.5 489.5 820.8 498.2 815.0 506.0 C809.2 513.8 803.3 525.2 801.0 529.0" fill="none" stroke="#ff6a60" stroke-width="2" opacity=".6" filter="url(#b1)" transform="translate(1.5 2)"/>
<path d="M974.0 445.0 C963.5 445.7 929.0 446.3 911.0 449.0 C893.0 451.7 878.5 455.5 866.0 461.0 C853.5 466.5 844.5 474.5 836.0 482.0 C827.5 489.5 820.8 498.2 815.0 506.0 C809.2 513.8 803.3 525.2 801.0 529.0" fill="none" stroke="#c8121a" stroke-width="1.5" opacity=".55" filter="url(#b1)"/>
<path d="M878 620 C881 700 879 800 876 905" stroke="#e0141c" stroke-width="15" fill="none" opacity=".38" filter="url(#b2)"/>
<path d="M595 640 C600 720 620 790 680 838 L640 840 L585 700 Z" fill="#ff5050" opacity=".5" filter="url(#b4)"/>
<path d="M700 580 C680 650 680 760 700 836 L740 690 L780 570 Z" fill="#ec1820" opacity=".45" filter="url(#b8)"/>
</g>
<path d="M802.0 532.0 C806.2 531.2 813.8 529.3 821.0 532.0 C828.2 534.7 839.2 540.8 845.0 548.0 C850.8 555.2 853.8 565.0 856.0 575.0 C858.2 585.0 858.8 595.5 858.0 608.0 C857.2 620.5 853.7 636.3 851.0 650.0 C848.3 663.7 844.5 678.3 842.0 690.0 C839.5 701.7 837.8 708.3 836.0 720.0 C834.2 731.7 832.7 746.7 831.0 760.0 C829.3 773.3 826.8 793.3 826.0 800.0 C825.0 802.5 826.0 810.5 820.0 815.0 C814.0 819.5 805.0 823.5 790.0 827.0 C775.0 830.5 746.5 834.3 730.0 836.0 C713.5 837.7 697.5 836.8 691.0 837.0 C694.5 827.3 705.5 797.7 712.0 779.0 C718.5 760.3 724.7 741.5 730.0 725.0 C735.3 708.5 740.5 691.5 744.0 680.0 C747.5 668.5 747.8 668.0 751.0 656.0 C754.2 644.0 758.5 623.0 763.0 608.0 C767.5 593.0 772.5 577.8 778.0 566.0 C783.5 554.2 792.0 542.7 796.0 537.0 C800.0 531.3 797.8 532.8 802.0 532.0 Z" fill="url(#glit)"/>
<g clip-path="url(#cg)"><rect x="685" y="525" width="185" height="320" filter="url(#nz2)"/><rect x="685" y="525" width="185" height="320" filter="url(#nz1)"/>
<circle cx="784.8" cy="769.8" r="0.7" fill="#c9909c"/><circle cx="797.1" cy="683.6" r="0.7" fill="#d8a4ae"/><circle cx="744.1" cy="722.1" r="0.8" fill="#c9909c"/><circle cx="778.5" cy="740.4" r="0.7" fill="#d8a4ae"/><circle cx="767.7" cy="671.9" r="1.1" fill="#d8a4ae"/><circle cx="796.0" cy="652.6" r="1.1" fill="#d8a4ae"/><circle cx="745.6" cy="810.2" r="0.7" fill="#d8a4ae"/><circle cx="796.9" cy="808.0" r="0.8" fill="#d8a4ae"/><circle cx="758.1" cy="808.3" r="0.8" fill="#d8a4ae"/><circle cx="810.3" cy="760.9" r="1.1" fill="#f0d0d4"/><circle cx="736.7" cy="712.6" r="0.8" fill="#f0d0d4"/><circle cx="740.2" cy="692.7" r="0.7" fill="#f0d0d4"/><circle cx="740.3" cy="702.2" r="0.9" fill="#c9909c"/><circle cx="790.7" cy="672.3" r="1.1" fill="#d8a4ae"/><circle cx="739.6" cy="810.6" r="0.7" fill="#f0d0d4"/><circle cx="802.6" cy="643.2" r="1.1" fill="#f0d0d4"/><circle cx="765.1" cy="787.2" r="1.1" fill="#e8c0c6"/><circle cx="791.6" cy="749.1" r="0.8" fill="#e8c0c6"/><circle cx="795.5" cy="802.7" r="1.1" fill="#f0d0d4"/><circle cx="776.0" cy="796.2" r="0.9" fill="#c9909c"/><circle cx="743.6" cy="771.0" r="0.9" fill="#f0d0d4"/><circle cx="737.9" cy="805.5" r="0.7" fill="#d8a4ae"/><circle cx="762.3" cy="746.9" r="0.8" fill="#f0d0d4"/><circle cx="757.1" cy="763.0" r="0.7" fill="#f0d0d4"/><circle cx="789.9" cy="693.6" r="0.7" fill="#d8a4ae"/><circle cx="792.7" cy="694.1" r="1.1" fill="#d8a4ae"/>
<path d="M802 534 C780 560 760 620 740 700 C725 760 705 810 693 836" stroke="#a0582e" stroke-width="2" fill="none"/></g>
<path d="M907 270 C925 320 940 380 942 435" stroke="#8c1016" stroke-width="1.3" stroke-dasharray="3 2" fill="none"/>
<ellipse cx="841" cy="404" rx="6.5" ry="9" fill="#fff" transform="rotate(18 841 404)" filter="url(#b1)"/>
<ellipse cx="935" cy="403" rx="4" ry="19" fill="#fff" filter="url(#b1)"/>
<ellipse cx="666" cy="602" rx="9" ry="1.9" fill="#5a1a0c" transform="rotate(-40 666 602)"/>
<path d="M866 904 L896 905 L894 917 L866 916 Z" fill="#7a4520"/>
</g>
</svg></div>
<!-- ===== toolbox panel ===== -->
<div id="panel"></div>
<span class="t" style="left:985.7px;top:186.2px;font-size:17.4px;font-weight:bold;color:#50505a;transform:scaleX(1.0403)">Toolbox</span>
<svg class="abs" style="left:1372px;top:188px" width="10" height="10" viewBox="0 0 10 10"><path d="M1.5 1.5 L8.5 8.5 M8.5 1.5 L1.5 8.5" stroke="#222" stroke-width="1.1"/></svg>
<div class="abs" style="left:983px;top:212px;width:420px;height:722px;border:1px solid #c4c4c4;background:#fff"></div>
<svg class="abs" style="left:996px;top:225px" width="44" height="33" viewBox="0 0 44 33">
  <rect width="44" height="33" fill="#77728f"/><rect x="23" width="21" height="33" fill="#5a5573"/><rect y="17" width="23" height="16" fill="#6a6583"/><rect x="23" y="17" width="21" height="16" fill="#4f4a66"/>
  <ellipse cx="22" cy="16.5" rx="14" ry="11.5" fill="#a9a8ae"/>
</svg>
<span class="t" style="left:1064px;top:236.1px;font-size:16px;font-weight:bold;transform:scaleX(1.0309)">Remove Background</span>
<!-- group 1 -->
<div class="grp" style="left:998px;top:293px;width:396px;height:348px"></div>
<div class="abs" style="left:1004px;top:284px;width:155px;height:18px;background:#fff"></div>
<span class="t" style="left:1007.4px;top:284.8px;font-size:16.3px;transform:scaleX(0.9767)">Remove Background</span>
<div class="abs" style="left:1009px;top:316px;width:56px;height:63px;border:1px solid #d8a85e;background:linear-gradient(#fddf80,#fde9a4 50%,#fff3c8);border-radius:2px"></div>
<div class="gbtn" style="left:1065px;top:316px;width:56px;height:63px"></div>
<div class="gbtn" style="left:1153px;top:316px;width:56px;height:63px"></div>
<!-- pencil green -->
<svg class="abs" style="left:1018px;top:328px" width="36" height="38" viewBox="0 0 36 38">
  <rect x="6" y="29" width="26" height="5.8" fill="#0be40b"/>
  <g transform="translate(7.7 28.6) rotate(33)"><path d="M-3.5 -6.5 H3.5 L0 0 Z" fill="#ece4d6"/><path d="M-1.3 -2.4 H1.3 L0 0 Z" fill="#1fcf1f"/>
  <rect x="-3.5" y="-23" width="7" height="16.5" fill="#3b405a"/><rect x="-3.5" y="-23" width="2.2" height="16.5" fill="#565c78"/><rect x="1.6" y="-23" width="1.9" height="16.5" fill="#2c3046"/>
  <rect x="-3.5" y="-25.6" width="7" height="2.6" fill="#d2d3da"/><path d="M-3.5 -25.6 V-27 Q0 -29.4 3.5 -27 V-25.6 Z" fill="#2f3348"/></g>
</svg>
<!-- pencil red -->
<svg class="abs" style="left:1077px;top:328px" width="36" height="38" viewBox="0 0 36 38">
  <rect x="6" y="29" width="26" height="5.8" fill="#fb2a1f"/>
  <g transform="translate(7.7 28.6) rotate(33)"><path d="M-3.5 -6.5 H3.5 L0 0 Z" fill="#ece4d6"/><path d="M-1.3 -2.4 H1.3 L0 0 Z" fill="#e02020"/>
  <rect x="-3.5" y="-23" width="7" height="16.5" fill="#3b405a"/><rect x="-3.5" y="-23" width="2.2" height="16.5" fill="#565c78"/><rect x="1.6" y="-23" width="1.9" height="16.5" fill="#2c3046"/>
  <rect x="-3.5" y="-25.6" width="7" height="2.6" fill="#d2d3da"/><path d="M-3.5 -25.6 V-27 Q0 -29.4 3.5 -27 V-25.6 Z" fill="#2f3348"/></g>
</svg>
<!-- eraser -->
<svg class="abs" style="left:1164px;top:330px" width="36" height="34" viewBox="0 0 36 34">
  <circle cx="17" cy="18.3" r="12.6" fill="#8f97a3" stroke="#353b52" stroke-width="1.7" stroke-dasharray="4.2 2.4"/>
  <circle cx="25.5" cy="9.5" r="8.6" fill="#e4e4e4"/>
  <path d="M22.8 3.2 H32 L29.2 9.6 H20 Z" fill="#f59ab4"/><path d="M20 9.6 H29.2 L26.4 16 H17.2 Z" fill="#86cdee"/>
</svg>
<span class="t" style="left:1010px;top:387.8px;font-size:16.3px;transform:scaleX(0.9667)">Radius</span>
<div class="abs" style="left:1020px;top:424px;width:307px;height:6px;background:#e7eaea;border:1px solid #d6d6d6"></div>
<div class="abs" style="left:1067px;top:410px;width:16px;height:33px;background:#0078d7"></div>
<div class="abs" style="left:1340px;top:413px;width:43px;height:30px;background:#f0f0f0;border:1px solid #7a7a7a;box-shadow:inset 0 0 0 1px #fff"></div>
<span class="t" style="left:1343.5px;top:418.3px;font-size:16.3px;transform:scaleX(0.9655)">50</span>
<div class="gbtn" style="left:1009px;top:468px;width:203px;height:48px"></div>
<span class="t" style="left:1057px;top:483.9px;font-size:16.3px;transform:scaleX(0.9690)"><span class="u">C</span>lear Selection</span>
<div class="gbtn" style="left:1070px;top:541px;width:252px;height:73px"></div>
<span class="t" style="left:1185.4px;top:568.5px;font-size:16.3px;transform:scaleX(0.9663)">Remo<span class="u">v</span>e</span>
<svg class="abs" style="left:1076px;top:563px" width="30" height="28" viewBox="0 0 30 28">
  <path d="M1.1 7 H19 V20.8 H1.1 L4.9 13.9 Z" fill="#47a233"/>
  <path d="M12 7 H19 V20.8 H15.5 Z" fill="#3f962d"/>
  <path d="M19.4 3.4 L27 13.8 L19.4 24.6 Z" fill="#5cb442" stroke="#5cb442" stroke-width="2.6" stroke-linejoin="round"/>
  <path d="M7.4 10.4 H9.8 L11.6 13.9 L9.8 17.6 H7.4 L9.2 13.9 Z" fill="#dcebd4"/>
</svg>
<!-- group 2 -->
<div class="grp" style="left:998px;top:668px;width:396px;height:194px"></div>
<div class="abs" style="left:1004px;top:660px;width:125px;height:18px;background:#fff"></div>
<span class="t" style="left:1007px;top:659.5px;font-size:16.3px;transform:scaleX(0.9860)">Add Background</span>
<div class="radio" style="left:1021.5px;top:707px"></div><div class="abs" style="left:1026px;top:711.5px;width:4.4px;height:4.4px;border-radius:50%;background:#1d2a44"></div>
<div class="radio" style="left:1021.5px;top:741.5px"></div>
<div class="radio" style="left:1021.5px;top:778.5px"></div>
<span class="t" style="left:1040px;top:704.5px;font-size:16.3px;transform:scaleX(0.9829)">Transparent</span>
<span class="t" style="left:1040px;top:739.5px;font-size:16.3px;transform:scaleX(0.9714)">Background Color</span>
<span class="t" style="left:1040px;top:776.5px;font-size:16.3px;transform:scaleX(0.9727)">Photo</span>
<div class="abs" style="left:1272px;top:726px;width:44px;height:44px;background:#fff;border:1px solid #e3e3e3;border-top:2px solid #6a6a6a;border-left:2px solid #6a6a6a"></div>
<div class="abs" style="left:1021px;top:809px;width:286px;height:28px;background:#f5f5f5;border:1px solid #dadada"></div>
<div class="gbtn" style="left:1322px;top:798px;width:59px;height:50px"></div>
<svg class="abs" style="left:1326px;top:811px" width="34" height="24" viewBox="0 0 34 24">
  <path d="M1 2 H11 L13 5 H24 V22 H1 Z" fill="#467bb0"/>
  <path d="M6 9.5 H33 L27 22.5 H1 Z" fill="#76b0e4"/>
</svg>
<div class="abs" style="left:1370px;top:827.5px;width:1.5px;height:1.5px;background:#333"></div>
<!-- ===== status bar ===== -->
<div class="abs" style="left:1px;top:933px;width:1394px;height:25px;background:#fff;border-top:1px solid #7a7a7a"></div><div class="abs" style="left:1px;top:957px;width:1394px;height:1px;background:#747474;z-index:60"></div>
<div class="abs" style="left:1px;top:934px;width:62px;height:23px;background:#e7edf7"></div>
<div class="abs" style="left:63px;top:934px;width:1px;height:23px;background:#444"></div>
<div class="abs" style="left:925px;top:934px;width:470px;height:23px;background:#e7edf7"></div>
<div class="abs" style="left:925px;top:934px;width:1px;height:23px;background:#777"></div>
<div class="abs" style="left:1053px;top:934px;width:1px;height:23px;background:#777"></div>
<div class="abs" style="left:1111px;top:934px;width:1px;height:23px;background:#777"></div>
<div class="abs" style="left:1259px;top:934px;width:1px;height:23px;background:#777"></div>
<div class="abs" style="left:1290px;top:934px;width:1px;height:23px;background:#777"></div>
<span class="t" style="left:9.9px;top:940.1px;font-size:14px;font-weight:bold;color:#1193d2;transform:scaleX(0.7215)">1:1</span>
<svg class="abs" style="left:35px;top:938px" width="22" height="17" viewBox="0 0 22 17">
  <path d="M4 1 H1 V4.5 M18 1 H21 V4.5 M4 16 H1 V12.5 M18 16 H21 V12.5" fill="none" stroke="#1e98d6" stroke-width="1.4"/>
  <rect x="4.5" y="3.5" width="13" height="10" rx="1.5" fill="#1e98d6"/>
</svg>
<svg class="abs" style="left:62px;top:935px" width="120" height="20" viewBox="0 0 120 20">
  <path d="M17 9.6 H102" stroke="#444" stroke-width="1"/><path d="M60.4 6.5 V12.5" stroke="#333" stroke-width="1"/>
  <circle cx="7.8" cy="9.6" r="7" fill="#f2f2f2" stroke="#c4c4c4"/><path d="M4 9.6 H11.6" stroke="#888" stroke-width="2"/>
  <circle cx="109.6" cy="9.6" r="7" fill="#f2f2f2" stroke="#c4c4c4"/><path d="M105.8 9.6 H113.4 M109.6 5.8 V13.4" stroke="#777" stroke-width="2"/>
  <path d="M75 3.5 L79.5 7.5 V15.5 H70.5 V7.5 Z" fill="#e9e9e9" stroke="#bdbdbd"/><rect x="73" y="8.5" width="4" height="5" fill="#cfcfcf"/>
</svg>
<div class="abs" style="left:926px;top:936px;width:330px;height:21px;overflow:hidden">
<span class="t" style="left:3.2px;top:5.9px;font-size:17.6px;transform:scaleX(0.9418)">Time (s): 45.9</span>
<span class="t" style="left:129.6px;top:5.9px;font-size:17.6px;transform:scaleX(0.7890)">JPG</span>
<span class="t" style="left:188.4px;top:5.9px;font-size:17.6px;transform:scaleX(0.9722)">(800x612x24)</span>
</div>
<svg class="abs" style="left:1268px;top:940px" width="14" height="14" viewBox="0 0 14 14"><circle cx="7" cy="7" r="6.5" fill="#1d8fd0"/><rect x="6" y="5.6" width="2.2" height="5.4" fill="#fff"/><circle cx="7.1" cy="3.6" r="1.3" fill="#fff"/></svg>
<svg class="abs" style="left:1300px;top:940px" width="12" height="13" viewBox="0 0 12 13"><rect width="12" height="13" fill="#1b5f94"/><path d="M8 13 V8 H10 L10.3 5.8 H8 V4.6 C8 3.9 8.3 3.6 9 3.6 H10.4 V1.6 H8.4 C6.6 1.6 5.8 2.6 5.8 4.3 V5.8 H4.2 V8 H5.8 V13 Z" fill="#fff"/></svg>
<svg class="abs" style="left:1322px;top:941px" width="14" height="12" viewBox="0 0 14 12"><path d="M13.5 1.6 C13 1.9 12.5 2 12 2.1 C12.5 1.7 12.9 1.2 13.1 0.6 C12.6 0.9 12 1.1 11.4 1.3 C10.3 0.1 8.3 0.2 7.4 1.5 C7 2.1 6.9 2.8 7 3.4 C4.8 3.3 2.9 2.3 1.5 0.7 C0.8 2 1.2 3.5 2.3 4.3 C1.9 4.3 1.5 4.2 1.1 4 C1.1 5.3 2 6.4 3.3 6.7 C2.9 6.8 2.5 6.8 2.1 6.7 C2.5 7.8 3.5 8.6 4.7 8.6 C3.6 9.5 2.1 9.9 0.7 9.7 C4.5 12.1 9.6 11 11.4 6.8 C11.9 5.7 12.1 4.6 12.1 3.5 C12.7 3 13.1 2.3 13.5 1.6 Z" fill="#35b4e4"/></svg>
<div class="abs" style="left:1344px;top:939px;width:16px;height:8px;background:#fdfdfd"></div><div class="abs" style="left:1344px;top:947px;width:16px;height:8px;background:#e8241a;border-radius:2px"></div>
<span class="t" style="left:1345.3px;top:938.3px;font-size:8.5px;font-weight:bold;transform:scaleX(0.8097)">You</span>
<span class="t" style="left:1344.8px;top:946.8px;font-size:8.5px;font-weight:bold;color:#fff;transform:scaleX(0.7365)">Tube</span>
<svg class="abs" style="left:1383px;top:946px" width="11" height="11" viewBox="0 0 11 11"><path d="M10 2 L2 10 M10 6 L6 10" stroke="#fff" stroke-width="1.6"/></svg>
<div id="win"></div>
</body>
</html>
